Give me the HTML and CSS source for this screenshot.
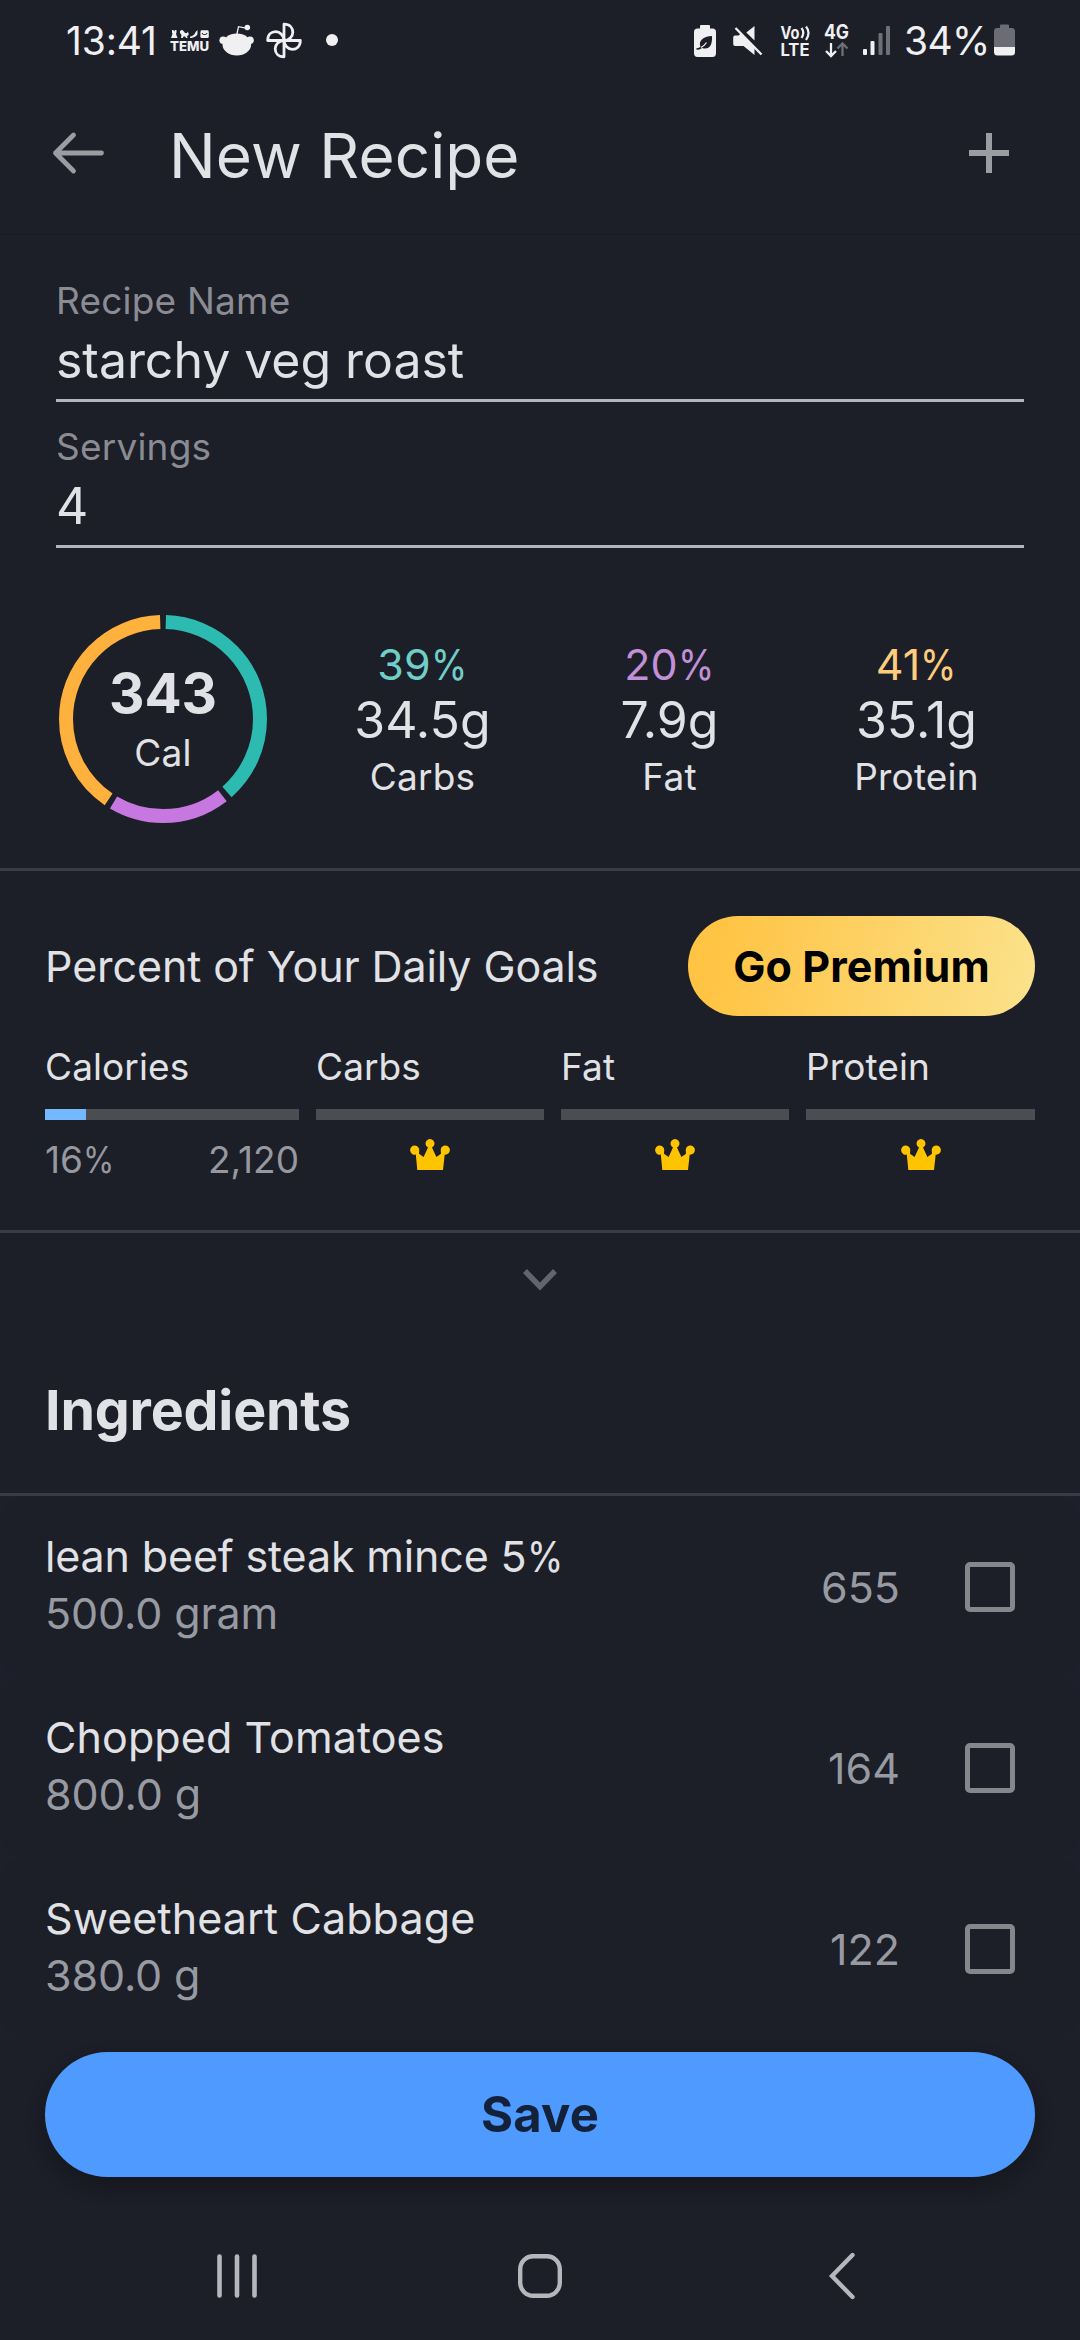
FILE: index.html
```html
<!DOCTYPE html>
<html lang="en">
<head>
<meta charset="utf-8">
<title>New Recipe</title>
<link rel="stylesheet" href="styles.css">
</head>
<body>
<div class="screen">
  <div class="status">
    <div class="status-left">
      <span class="clock">13:41</span>
      <svg class="ic-temu" width="40" height="36" viewBox="0 0 40 36" fill="#f0f0f2">
        <path d="M2 8h1.5l.7 1.500L5 8h1.500v2.500L6 12l1.500 4H1l1.500-4L2 10.500z"/>
        <path d="M10 9l2-1.200 2 1.700 1 1.500h2l1-1.500.8 3.500-1.800 1 .6 2h-1.500l-1-1.500h-1.600l-.7 1.500H11l.5-3-1.500-2z"/>
        <path d="M27.500 8v3.500c0 1.200-1 2.300-2.200 3-1.300.9-3 1.500-5.300 1.500l.2-1.500c2.800-.2 4.500-2.200 5.400-4.500z"/>
        <path d="M31 8.200h7.200l.6 1.800v5.200l-1 .9h-6.400l-1-.9V10zM31.600 11c1 2.800 4.900 2.800 5.900 0h-1c-.8 1.700-3.100 1.700-3.900 0z" fill-rule="evenodd"/>
        <text x="0" y="29" textLength="39" lengthAdjust="spacingAndGlyphs" class="temu-text">TEMU</text>
      </svg>
      <svg class="ic-reddit" width="36" height="36" viewBox="0 0 36 36" fill="#f0f0f2">
        <ellipse cx="17.800" cy="22.500" rx="14.300" ry="11"/>
        <circle cx="4.200" cy="18.200" r="3.800"/><circle cx="31" cy="18.200" r="3.800"/>
        <circle cx="28.300" cy="5.500" r="2.800"/>
        <path d="M17.500 14l2-9.300 7.500 1.400" fill="none" stroke="#f0f0f2" stroke-width="1.300"/>
      </svg>
      <svg class="ic-fan" width="36" height="36" viewBox="0 0 36 36" fill="none" stroke="#f0f0f2" stroke-width="2.800" stroke-linejoin="round">
        <path id="blade" d="M18 18.500V2.200C24 2.200 26.800 6 26.800 10.200S23 18.500 18 18.500z"/>
        <use href="#blade" transform="rotate(90 18 18.500)"/>
        <use href="#blade" transform="rotate(180 18 18.500)"/>
        <use href="#blade" transform="rotate(270 18 18.500)"/>
      </svg>
      <span class="dot"></span>
    </div>
    <div class="status-right">
      <svg class="ic-saver" width="22" height="36" viewBox="0 0 22 36">
        <path d="M7 3h8q1 0 1 1v2.500h2.500Q22 6.500 22 10v21q0 4-3.500 4h-15Q0 35 0 31V10q0-3.500 3.500-3.500H6V4q0-1 1-1z" fill="#f0f0f2"/>
        <path d="M18 14c.5 8-2 12.500-7 12.500-2 0-3.500-.7-4.500-1.500C4 19 9 14.500 18 14z" fill="#1c1e28"/>
        <path d="M2.500 27c4 0 7-2.500 9.500-6.500" fill="none" stroke="#1c1e28" stroke-width="1.600"/>
        <path d="M7 25.500c2-1 4-2.700 5.500-5" fill="none" stroke="#f0f0f2" stroke-width="1.300"/>
      </svg>
      <svg class="ic-mute" width="30" height="36" viewBox="0 0 30 36" fill="#f0f0f2">
        <path d="M21.500 4v14.500L13.300 10.500z"/>
        <path d="M2 13.500h3.500l2.500-2L21.500 25v8L10.500 24H2Q.2 24 .2 22v-6.500Q.2 13.500 2 13.500z"/>
        <path d="M2.500 6L28.500 32.500" stroke="#f0f0f2" stroke-width="2.400"/>
      </svg>
      <svg class="ic-volte" width="33" height="36" viewBox="0 0 33 36" fill="#f0f0f2">
        <text x="0.500" y="16.500" textLength="19" lengthAdjust="spacingAndGlyphs" class="net-text">Vo</text>
        <path d="M21.500 6q3.500 4.500 0 10M26 4.500q5 6 0 13.500" fill="none" stroke="#f0f0f2" stroke-width="2.200"/>
        <text x="0.500" y="34" textLength="29" lengthAdjust="spacingAndGlyphs" class="net-text">LTE</text>
      </svg>
      <svg class="ic-4g" width="28" height="38" viewBox="-1 0 28 38" fill="none">
        <text x="0" y="18" textLength="25" lengthAdjust="spacingAndGlyphs" class="net-text big">4G</text>
        <path d="M7 22v12.500M2 30l5 5 5-5" stroke="#f0f0f2" stroke-width="2.300"/>
        <path d="M18.500 35V22.500M13.500 27.500l5-5 5 5" stroke="#6f7077" stroke-width="2.300"/>
      </svg>
      <svg class="ic-signal" width="28" height="36" viewBox="0 0 28 36">
        <rect x="0" y="27" width="4" height="6" rx="1" fill="#f0f0f2"/><rect x="7.500" y="19" width="4" height="14" rx="1" fill="#f0f0f2"/>
        <rect x="15.500" y="11" width="4" height="22" rx="1" fill="#6f7077"/><rect x="23" y="4" width="4" height="29" rx="1" fill="#6f7077"/>
      </svg>
      <span class="battery-text">34%</span>
      <svg class="ic-battery" width="21" height="36" viewBox="0 0 21 36">
        <path d="M7 2.500h7q1 0 1 1V6h3q3 0 3 3.500V25H0V9.500Q0 6 3 6h3V3.500q0-1 1-1z" fill="#6b6c75"/>
        <path d="M0 25h21v5q0 3.500-3.500 3.500h-14Q0 33.500 0 30z" fill="#f0f0f2"/>
      </svg>
    </div>
  </div>

  <header class="appbar">
    <svg class="back" width="54" height="44" viewBox="0 0 54 44" fill="none" stroke="#9c9da3" stroke-width="4.800" stroke-linecap="round" stroke-linejoin="round"><path d="M49.500 22H3.500M21.500 4L3.500 22l18 18"/></svg>
    <h1 class="title">New Recipe</h1>
    <svg class="add" width="40" height="40" viewBox="0 0 40 40" stroke="#9c9da3" stroke-width="6"><path d="M20 0v40M0 20h40"/></svg>
  </header>

  <section class="form">
    <div class="field"><div class="label">Recipe Name</div><div class="value">starchy veg roast</div></div>
    <div class="field"><div class="label">Servings</div><div class="value">4</div></div>
  </section>

  <section class="summary">
    <div class="ring">
      <svg class="ring-chart" width="208" height="208" viewBox="0 0 208 208" fill="none" stroke-width="14">
        <circle cx="104" cy="104" r="97" pathLength="360" stroke="#2dbab1" stroke-dasharray="137 223" stroke-dashoffset="-1.700" transform="rotate(-90 104 104)"/>
        <circle cx="104" cy="104" r="97" pathLength="360" stroke="#c677e0" stroke-dasharray="68.500 291.500" stroke-dashoffset="-142.200" transform="rotate(-90 104 104)"/>
        <circle cx="104" cy="104" r="97" pathLength="360" stroke="#ffb13d" stroke-dasharray="144.200 215.800" stroke-dashoffset="-214.100" transform="rotate(-90 104 104)"/>
      </svg>
      <div class="ring-text"><strong class="kcal">343</strong><span class="unit">Cal</span></div>
    </div>
    <div class="macros">
      <div class="macro"><span class="share carbs">39<span class="pct">%</span></span><span class="grams">34.5g</span><span class="name">Carbs</span></div>
      <div class="macro"><span class="share fat">20<span class="pct">%</span></span><span class="grams">7.9g</span><span class="name">Fat</span></div>
      <div class="macro"><span class="share protein">41<span class="pct">%</span></span><span class="grams">35.1g</span><span class="name">Protein</span></div>
    </div>
  </section>

  <section class="goals">
    <div class="goals-head"><h2 class="goals-title">Percent of Your Daily Goals</h2><button class="premium">Go Premium</button></div>
    <div class="goal-grid">
      <div class="goal"><div class="goal-name">Calories</div><div class="bar"><div class="fill" style="width:16%"></div></div><div class="goal-foot"><span>16<span class="pct">%</span></span><span>2,120</span></div></div>
      <div class="goal"><div class="goal-name">Carbs</div><div class="bar"></div><div class="goal-lock"><svg width="40" height="32" viewBox="0 0 40 32" fill="#ffc400"><path id="crown" d="M7.300 31L5.800 15.600A4.600 4.600 0 1 1 9.200 12L9 14.800 13.600 18 18 8.600A4.500 4.500 0 1 1 22 8.600L26.400 18 31 14.800 30.800 12A4.600 4.600 0 1 1 34.700 15.600L33 31z"/></svg></div></div>
      <div class="goal"><div class="goal-name">Fat</div><div class="bar"></div><div class="goal-lock"><svg width="40" height="32" viewBox="0 0 40 32" fill="#ffc400"><use href="#crown"/></svg></div></div>
      <div class="goal"><div class="goal-name">Protein</div><div class="bar"></div><div class="goal-lock"><svg width="40" height="32" viewBox="0 0 40 32" fill="#ffc400"><use href="#crown"/></svg></div></div>
    </div>
  </section>

  <div class="expand"><svg width="34" height="22" viewBox="0 0 34 22" fill="none" stroke="#63656e" stroke-width="5.500"><path d="M2 2l15 15.500L32 2"/></svg></div>
  <h2 class="ingredients-title">Ingredients</h2>
  <ul class="ingredients">
    <li class="item"><div class="info"><div class="food food-mince">lean beef steak mince 5<span class="pct">%</span></div><div class="amount">500.0 gram</div></div><span class="cals">655</span><span class="check"></span></li>
    <li class="item"><div class="info"><div class="food">Chopped Tomatoes</div><div class="amount">800.0 g</div></div><span class="cals">164</span><span class="check"></span></li>
    <li class="item"><div class="info"><div class="food">Sweetheart Cabbage</div><div class="amount">380.0 g</div></div><span class="cals">122</span><span class="check"></span></li>
  </ul>
  <button class="save">Save</button>

  <nav class="nav">
    <svg width="44" height="46" viewBox="0 0 44 46" stroke="#b6b7bc" stroke-width="4.600" stroke-linecap="round"><path d="M4.500 3.500v39M22 3.500v39M39.500 3.500v39"/></svg>
    <svg width="46" height="46" viewBox="0 0 46 46" fill="none" stroke="#b6b7bc" stroke-width="4.400"><rect x="3.200" y="3.200" width="39.600" height="39.600" rx="13"/></svg>
    <svg width="30" height="48" viewBox="0 0 30 48" fill="none" stroke="#b6b7bc" stroke-width="4.400" stroke-linecap="round"><path d="M25.500 3L5 24l20.500 21"/></svg>
  </nav>
</div>
</body>
</html>
```
FILE: styles.css
```css
* { box-sizing: border-box; margin: 0; padding: 0; }
body { background: #1c1e28; font-family: Inter, "Liberation Sans", sans-serif; color: #e1e2e5; }
button { border: 0; font-family: inherit; }
svg { display: block; flex: none; overflow: visible; }
.screen { width: 1080px; height: 2340px; overflow: hidden; }
.pct { display: inline-block; transform: scaleX(.86); transform-origin: left; margin-right: -.12em; }

/* Status bar */
.status { display: flex; justify-content: space-between; align-items: center; height: 80px; padding: 0 65px 0 66px; color: #f0f0f2; font-size: 39px; }
.status-left, .status-right { display: flex; align-items: center; white-space: nowrap; }
.clock { width: 104px; letter-spacing: -.15px; }
.temu-text { font: 800 13.400px Inter, sans-serif; }
.net-text { font: 700 17px Inter, sans-serif; fill: #f0f0f2; }
.net-text.big { font-size: 19.500px; }
.ic-reddit { margin-left: 9px; }
.ic-fan { margin-left: 11px; }
.dot { width: 12px; height: 12px; margin-left: 24px; border-radius: 50%; background: #f0f0f2; }
.ic-mute { margin-left: 17px; }
.ic-volte { margin-left: 17px; }
.ic-4g { margin-left: 10px; }
.ic-signal { margin-left: 12px; }
.battery-text { width: 90px; margin-left: 13px; letter-spacing: -.6px; }

/* App bar */
.appbar { display: flex; align-items: center; height: 155px; padding: 0 71px 4px 52px; border-bottom: 1px solid #191a24; }
.back, .add { margin-bottom: 4px; }
.title { flex: 1; margin-left: 63px; font-size: 62px; font-weight: 400; letter-spacing: .1px; }

/* Form */
.form { display: grid; gap: 23px; padding: 44px 56px 0; }
.field { border-bottom: 3px solid #b2b5bd; }
.label { font-size: 37px; line-height: 44px; letter-spacing: .2px; color: #8b8c93; }
.value { padding-bottom: 1px; font-size: 50px; line-height: 75px; letter-spacing: -.05px; }

/* Calorie and macro summary */
.summary { display: flex; justify-content: space-between; align-items: center; height: 323px; padding: 67px 40px 45px 59px; border-bottom: 3px solid #3a3b46; }
.ring { display: grid; width: 208px; height: 208px; }
.ring-chart, .ring-text { grid-area: 1 / 1; }
.ring-text { display: flex; flex-direction: column; align-items: center; padding-top: 45px; }
.kcal { font-size: 55px; line-height: 66px; }
.unit { font-size: 37px; line-height: 54px; letter-spacing: .3px; }
.macros { display: grid; grid-template-columns: repeat(3, 247px); padding-top: 3px; }
.macro { display: flex; flex-direction: column; align-items: center; }
.share { font-size: 43px; line-height: 56px; }
.grams { font-size: 50px; line-height: 56px; }
.name { font-size: 37px; line-height: 58px; letter-spacing: .2px; }
.carbs { color: #6fcfc8; }
.fat { color: #c290d6; }
.protein { color: #ffcb7d; }

/* Daily goals */
.goals { padding: 45px 45px 47px; border-bottom: 3px solid #3a3b46; }
.goals-head { display: flex; justify-content: space-between; align-items: center; }
.goals-title { font-size: 43px; font-weight: 400; letter-spacing: -.1px; }
.premium { width: 347px; height: 100px; border-radius: 50px; background: linear-gradient(100deg, #ffc444 10%, #fbe28c); color: #000; font-size: 43px; font-weight: 700; letter-spacing: .1px; }
.goal-grid { display: grid; grid-template-columns: 254px 228px 228px 229px; gap: 17px; margin-top: 26px; }
.goal-name { font-size: 37px; line-height: 50px; letter-spacing: .1px; }
.bar { height: 11px; margin: 17px 0 18px; background: #4b4d53; }
.fill { height: 11px; background: #74b9ff; }
.goal-foot { display: flex; justify-content: space-between; padding-bottom: 1px; font-size: 37px; line-height: 44px; color: #97989f; }
.goal-lock { display: flex; justify-content: center; padding-top: 1px; }

.expand { display: flex; justify-content: center; align-items: center; height: 94px; }

/* Ingredients */
.ingredients-title { padding-left: 45px; font-size: 55.500px; font-weight: 650; line-height: 166px; letter-spacing: -.2px; border-bottom: 3px solid #3a3b46; }
.ingredients { list-style: none; background: #1d1f2a; }
.item { display: flex; align-items: center; height: 181px; padding: 0 65px 0 45px; border-radius: 26px; background: #1c1e28; }
.info { flex: 1; padding-bottom: 3px; font-size: 43px; line-height: 57px; letter-spacing: .1px; }
.food-mince { letter-spacing: -.15px; }
.amount { color: #989aa2; letter-spacing: -.1px; }
.cals { margin-right: 65px; font-size: 43px; color: #989aa2; }
.check { width: 50px; height: 50px; border: 5px solid #86878d; border-radius: 5px; }

.save { display: block; width: 990px; height: 125px; margin: 13px 45px 0; border-radius: 63px; background: #4f9aff; box-shadow: 0 9px 18px rgba(12, 14, 16, .4); color: #13213a; font-size: 49px; font-weight: 700; letter-spacing: .2px; }

/* System navigation */
.nav { display: grid; grid-template-columns: repeat(3, 302.500px); justify-items: center; align-items: center; height: 98px; margin: 50px 0 0 86px; }
```
